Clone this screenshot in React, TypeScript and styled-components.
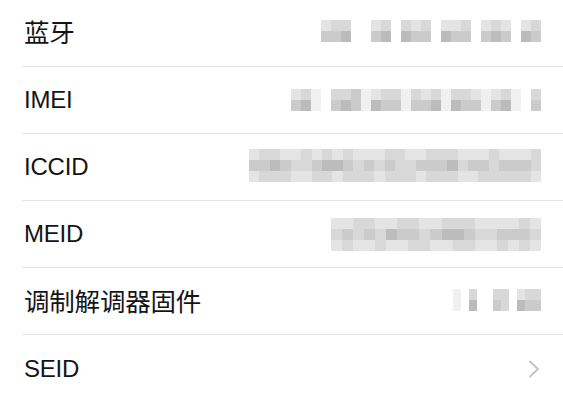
import React, { FC } from "react";
import styled, { createGlobalStyle } from "styled-components";

type Masked = {
  width: number;
  top: number;
  rows: string[];
};

type Item = {
  id: string;
  title: string;
  cjk?: boolean;
  value?: Masked;
  link?: boolean;
};

// pixelated (mosaic) values: each char is one cell, " " is white
const items: Item[] = [
  {
    id: "bt",
    title: "蓝牙",
    cjk: true,
    value: {
      width: 220,
      top: -3,
      rows: [
        "abb  ab bab aab aba ab",
        "ccd  cd dcc dcc cdc dc",
      ],
    },
  },
  {
    id: "imei",
    title: "IMEI",
    value: {
      width: 250,
      top: 0,
      rows: [
        "ab. bbc.abb.bab.bba.ab. b",
        "cd. cdc.dcc.ccd.dcc.cd. c",
      ],
    },
  },
  {
    id: "iccid",
    title: "ICCID",
    value: {
      width: 292,
      top: -2,
      rows: [
        "abbaabababaaabbaabbbaaabaaab",
        "ccdcbbcddcbcbcbbcccdbccbcccb",
        "abbbaabbabbbabbbabbbaabbbbba",
      ],
    },
  },
  {
    id: "meid",
    title: "MEID",
    value: {
      width: 210,
      top: 0,
      rows: [
        "aabbaabbaabbbaaaaba",
        "bcbcbdccbcddcbbcccb",
        "abaabaabbaabbaababa",
      ],
    },
  },
  {
    id: "modem",
    title: "调制解调器固件",
    cjk: true,
    value: {
      width: 88,
      top: -2,
      rows: [". b  bb abb", ". d  cb dcc"],
    },
  },
  { id: "seid", title: "SEID", link: true },
];

const shades: Record<string, string> = {
  ".": "#f0f0f0",
  a: "#e4e4e4",
  b: "#d8d8d8",
  c: "#cbcbcb",
  d: "#bcbcbc",
};

const Mosaic: FC<{ value: Masked }> = ({ value }) => {
  const cols = value.rows[0].length;
  return (
    <MosaicGrid $cols={cols} $width={value.width} $top={value.top}>
      {value.rows.map((row, r) =>
        row.split("").map((ch, c) => (
          <MosaicCell key={`${r}-${c}`} $shade={shades[ch] || "transparent"} />
        ))
      )}
    </MosaicGrid>
  );
};

const Chevron: FC = () => (
  <svg width="14" height="20" viewBox="0 0 14 20" fill="none">
    <path
      d="M3 2.5 L11 10 L3 17.5"
      stroke="#c5c5c9"
      strokeWidth="2"
      strokeLinecap="round"
      strokeLinejoin="round"
    />
  </svg>
);

const App: FC = () => {
  return (
    <>
      <GlobalStyle />
      <AboutList>
        {items.map((item) => (
          <AboutRow key={item.id}>
            <RowTitle $cjk={!!item.cjk}>{item.title}</RowTitle>
            <RowValue>
              {item.value && <Mosaic value={item.value} />}
              {item.link && <Chevron />}
            </RowValue>
          </AboutRow>
        ))}
      </AboutList>
    </>
  );
};

const GlobalStyle = createGlobalStyle`
  html, body {
    margin: 0;
    padding: 0;
    background: #ffffff;
  }
  body {
    font-family: "Liberation Sans", "Noto Sans CJK SC", sans-serif;
    -webkit-font-smoothing: antialiased;
  }
`;

const AboutList = styled.div`
  width: 563px;
  height: 400px;
  overflow: hidden;
  background: #ffffff;
  padding-left: 22px;
  box-sizing: border-box;
`;

const AboutRow = styled.div`
  display: flex;
  align-items: center;
  justify-content: space-between;
  height: 67.6px;
  padding-right: 22px;
  box-sizing: border-box;
  border-bottom: 1.5px solid #e2e2e2;
  margin-top: -0.5px;

  &:last-child {
    border-bottom: none;
  }
`;

const RowTitle = styled.span<{ $cjk: boolean }>`
  padding-left: 2px;
  font-size: ${(p) => (p.$cjk ? "25.5px" : "24px")};
  margin-top: ${(p) => (p.$cjk ? "-4px" : "0")};
  color: #141414;
  letter-spacing: -0.2px;
`;

const RowValue = styled.div`
  display: flex;
  align-items: center;
`;

const MosaicGrid = styled.div<{
  $cols: number;
  $width: number;
  $top: number;
}>`
  display: grid;
  grid-template-columns: repeat(${(p) => p.$cols}, 1fr);
  grid-auto-rows: 11px;
  width: ${(p) => p.$width}px;
  margin-top: ${(p) => p.$top}px;
  filter: blur(0.4px);
`;

const MosaicCell = styled.div<{ $shade: string }>`
  background: ${(p) => p.$shade};
`;

export default App;
